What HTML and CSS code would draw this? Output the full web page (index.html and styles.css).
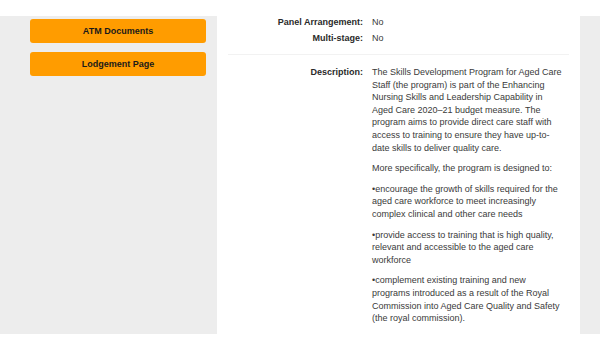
FILE: index.html
```html
<!DOCTYPE html>
<html>
<head>
<meta charset="utf-8">
<link rel="stylesheet" href="styles.css">
</head>
<body>
<div class="page">
  <aside class="sidebar">
    <a class="btn">ATM Documents</a>
    <a class="btn">Lodgement Page</a>
  </aside>
  <main class="main">
    <div class="row">
      <div class="label">Panel Arrangement:</div>
      <div class="value">No</div>
    </div>
    <div class="row">
      <div class="label">Multi-stage:</div>
      <div class="value">No</div>
    </div>
    <hr class="sep">
    <div class="row">
      <div class="label">Description:</div>
      <div class="value desc">
        <p>The Skills Development Program for Aged Care Staff (the program) is part of the Enhancing Nursing Skills and Leadership Capability in Aged Care 2020–21 budget measure. The program aims to provide direct care staff with access to training to ensure they have up-to-date skills to deliver quality care.</p>
        <p>More specifically, the program is designed to:</p>
        <p>•encourage the growth of skills required for the aged care workforce to meet increasingly complex clinical and other care needs</p>
        <p>•provide access to training that is high quality, relevant and accessible to the aged care workforce</p>
        <p>•complement existing training and new programs introduced as a result of the Royal Commission into Aged Care Quality and Safety (the royal commission).</p>
      </div>
    </div>
  </main>
  <aside class="rail"></aside>
</div>
</body>
</html>
```
FILE: styles.css
```css
html, body {
  margin: 0;
  padding: 0;
  background: #ffffff;
}
body {
  padding: 16px 0;
  font-family: "Liberation Sans", Arial, sans-serif;
  font-size: 9px;
  color: #3a3a3a;
}
.page {
  display: flex;
  height: 318px;
}
.sidebar {
  width: 217px;
  box-sizing: border-box;
  background: #ededed;
  padding: 3px 11px 0 30px;
  display: flex;
  flex-direction: column;
  gap: 9px;
}
.btn {
  display: flex;
  align-items: center;
  justify-content: center;
  height: 24px;
  background: #ff9c00;
  border-radius: 3px;
  font-weight: bold;
  font-size: 9px;
  color: #1a1a1a;
}
.main {
  flex: 1;
  padding: 0 11px;
  overflow: hidden;
}
.rail {
  width: 20px;
  background: #ededed;
}
.row {
  display: grid;
  grid-template-columns: 135px 192px;
  column-gap: 9px;
  line-height: 12px;
  margin-bottom: 4px;
}
.label {
  text-align: right;
  font-weight: bold;
  color: #2a2a2a;
}
.sep {
  border: 0;
  border-top: 1px solid #f2f2f2;
  margin: 10px 0 11px;
}
.desc {
  line-height: 12.6px;
}
.desc p {
  margin: 0 0 8px;
}
```
